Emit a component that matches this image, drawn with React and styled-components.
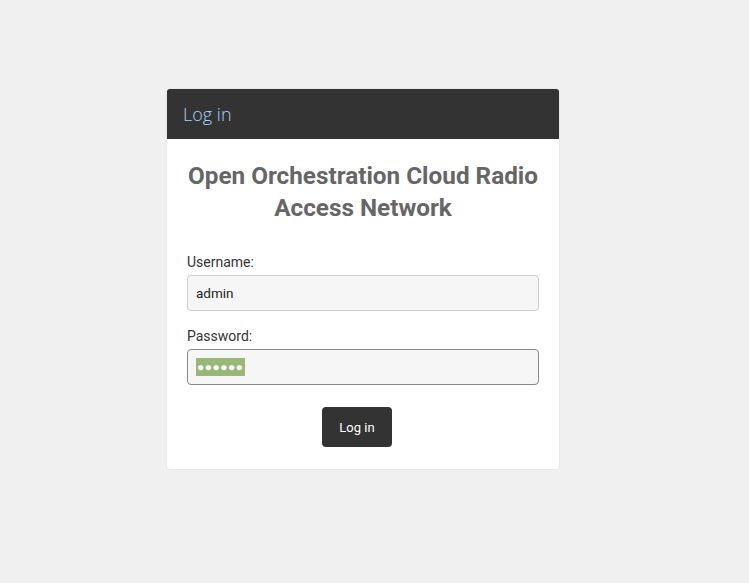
import React from 'react';
import styled, { createGlobalStyle } from 'styled-components';

const GlobalStyle = createGlobalStyle`
	body {
		margin: 0;
		background: #f0f0f0;
		font-family: Roboto, "Liberation Sans", sans-serif;
	}
`;

const Page = styled.div`
	min-height: 583px;
	box-sizing: border-box;
	padding: 89px 0 0 167px;
`;

const Card = styled.div`
	width: 392px;
	background: #fff;
	border-radius: 3px;
	box-shadow: 0 0 2px rgba(0, 0, 0, 0.12);
	overflow: hidden;
`;

const CardHeader = styled.div`
	height: 50px;
	background: #333;
	display: flex;
	align-items: center;
	padding: 0 16px;
	font-family: "Open Sans", sans-serif;
	font-weight: 300;
	font-size: 18px;
	color: #a9d4ff;
`;

const CardBody = styled.div`
	padding: 21px 20px 22px;
	display: flex;
	flex-direction: column;
`;

const Title = styled.h1`
	margin: 0 0 28px;
	font-size: 24.3px;
	line-height: 32px;
	font-weight: 700;
	color: #666;
	text-align: center;
`;

const Label = styled.label`
	font-size: 14px;
	line-height: 20px;
	color: #333;
	margin-bottom: 3px;
`;

const Field = styled.div`
	box-sizing: border-box;
	height: 36px;
	background: #f6f6f6;
	border: 1px solid ${props => (props.focused ? '#888' : '#ccc')};
	border-radius: 4px;
	padding: 0 8px;
	display: flex;
	align-items: center;
	font-size: 13.5px;
	color: #222;
	margin-bottom: ${props => props.gap || 0}px;
`;

const Selected = styled.span`
	background: #9ab77a;
	color: #fff;
	font-size: 12px;
	letter-spacing: 0.5px;
	line-height: 18px;
	padding: 0 1px;
`;

const Button = styled.button`
	align-self: center;
	margin: 22px 12px 0 0;
	width: 70px;
	height: 40px;
	border: none;
	border-radius: 4px;
	background: #333;
	color: #fff;
	font-family: Roboto, sans-serif;
	font-size: 13px;
	cursor: pointer;
`;

export default function App() {
	return (
		<Page>
			<GlobalStyle />
			<Card>
				<CardHeader>Log in</CardHeader>
				<CardBody>
					<Title>Open Orchestration Cloud Radio Access Network</Title>
					<Label>Username:</Label>
					<Field gap={15}>admin</Field>
					<Label>Password:</Label>
					<Field focused>
						<Selected>●●●●●●</Selected>
					</Field>
					<Button>Log in</Button>
				</CardBody>
			</Card>
		</Page>
	);
}
